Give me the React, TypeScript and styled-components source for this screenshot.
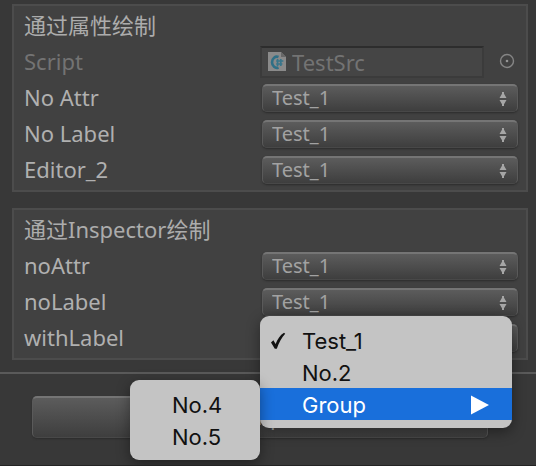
import React from "react";
import styled, { createGlobalStyle, css } from "styled-components";

const GlobalStyle = createGlobalStyle`
  * { box-sizing: border-box; }
  html, body { margin: 0; background: #383838; }
  body, button, input, select {
    font-family: "Noto Sans", "Noto Sans CJK SC", sans-serif;
  }
`;

const Page = styled.main`
  display: flex;
  flex-direction: column;
  min-height: 100vh;
  padding-top: 4px;
  overflow: hidden;
  background: #383838;
  border-bottom: 1px solid #242424;
`;

const Panel = styled.section`
  margin: 0 8px 16px 12px;
  padding: 2px;
  border: 2px solid #4c4c4c;
  background: #414141;

  &:last-of-type { margin-bottom: 12px; }
`;

const Title = styled.h2`
  margin: 0;
  padding: 0 8px 2px;
  font-size: 22px;
  line-height: 34px;
  font-weight: 400;
  color: #acacac;
`;

const Row = styled.div`
  display: grid;
  grid-template-columns: 238px minmax(0, 1fr);
  align-items: center;
  height: 36px;
  padding: 0 6px 0 8px;
`;

const Label = styled.label<{ $muted?: boolean }>`
  padding-bottom: 2px;
  font-size: 22px;
  line-height: 34px;
  color: ${(p) => (p.$muted ? "#737373" : "#b0b0b0")};
`;

const Control = styled.div`
  position: relative;
  height: 28px;
`;

const raised = css`
  border: 1px solid #5a5a5a;
  border-top: 2px solid #757575;
  border-bottom-color: #484848;
  border-radius: 5px;
  background: linear-gradient(#5c5c5c, #3e3e3e);
  box-shadow: 0 1px 2px #2c2c2c;
`;

const Select = styled.select`
  ${raised}
  display: block;
  width: 100%;
  height: 28px;
  padding: 0 9px 2px;
  appearance: none;
  font-size: 20px;
  line-height: 22px;
  color: #a2a2a2;
`;

const Arrows = styled.svg`
  position: absolute;
  top: 7px;
  right: 11px;
  pointer-events: none;
`;

const ObjectControl = styled.div`
  display: flex;
  align-items: center;
  margin-left: -2px;
`;

const ObjectField = styled.div`
  display: flex;
  flex: 1;
  align-items: center;
  gap: 6px;
  min-width: 0;
  height: 32px;
  padding: 0 6px;
  border: 2px solid #3b3b3b;
  border-top-color: #2d2d2d;
  background: #454545;
`;

const ObjectInput = styled.input`
  flex: 1;
  min-width: 0;
  padding: 0;
  border: 0;
  background: none;
  font-size: 22px;
  line-height: 28px;
  color: #737373;
`;

const Picker = styled.button`
  display: flex;
  width: 34px;
  height: 32px;
  padding: 7px 0 0 15px;
  border: 0;
  background: none;
`;

const Menu = styled.ul`
  position: absolute;
  z-index: 1;
  top: -8px;
  left: -2px;
  width: 252px;
  margin: 0;
  padding: 8px 0;
  list-style: none;
  border-radius: 9px;
  background: #c4c4c4;
  box-shadow: 0 4px 14px rgba(0, 0, 0, 0.4);
`;

const SubMenu = styled(Menu)`
  top: -8px;
  right: 100%;
  left: auto;
  width: 130px;
`;

const MenuEntry = styled.li`
  position: relative;
`;

const MenuItem = styled.button<{ $active?: boolean }>`
  display: grid;
  grid-template-columns: 32px 1fr auto;
  align-items: center;
  width: 100%;
  height: 32px;
  padding: 1px 22px 0 10px;
  border: 0;
  background: ${(p) => (p.$active ? "#196fdb" : "none")};
  font-family: Inter, sans-serif;
  font-size: 22px;
  line-height: 30px;
  text-align: left;
  color: ${(p) => (p.$active ? "#fff" : "#111")};
`;

const Footer = styled.footer`
  padding: 22px 48px 27px 32px;
  border-top: 2px solid #5a5a5a;
`;

const AddButton = styled.button`
  ${raised}
  display: block;
  width: 100%;
  height: 42px;
  padding: 0 0 4px;
  font-size: 22px;
  line-height: 34px;
  color: #a2a2a2;
`;

const ScriptIcon = () => (
  <svg width="18" height="20" viewBox="0 0 18 20" aria-hidden="true">
    <path d="M0 0h13l5 5v14H0z" fill="#8a8a8a" />
    <path d="M13 0v5h5z" fill="#686868" />
    <path d="M10.500 5A4.800 5.600 0 1 0 10.500 15.500" fill="none" stroke="#2f6f86" strokeWidth="2.600" />
    <path d="M9.600 7v7M12.800 7v7M8.200 9h7.200M8.200 12h6.200" stroke="#39758a" strokeWidth="1.700" />
  </svg>
);

const PopupArrows = () => (
  <Arrows width="8" height="16" viewBox="0 0 8 16" aria-hidden="true">
    <path d="M4 1 7.500 7h-7zM4 15 7.500 9h-7z" fill="#a6a6a6" />
    <path d="M4 1v5M4 10v5" stroke="#a6a6a6" strokeWidth="2" />
  </Arrows>
);

const CheckMark = () => (
  <svg width="16" height="18" viewBox="0 0 16 18" aria-hidden="true">
    <path d="M1 10.6 3.400 8.200 5.6 12C7.6 7 10 3.200 14 .8L15.200 1.800C11.800 5.400 9 10.400 6.800 16.800H4.800z" fill="#111" />
  </svg>
);

const SubMenuArrow = () => (
  <svg width="20" height="20" viewBox="0 0 20 20" aria-hidden="true">
    <path d="M1 .5 19 10 1 19.500z" fill="#fff" />
  </svg>
);

type PopupProps = { id: string; label: string; children?: React.ReactNode };

const PopupRow = ({ id, label, children }: PopupProps) => (
  <Row>
    <Label htmlFor={id}>{label}</Label>
    <Control>
      <Select id={id} defaultValue="Test_1">
        <option>Test_1</option>
        <option>No.2</option>
        <optgroup label="Group">
          <option>No.4</option>
          <option>No.5</option>
        </optgroup>
      </Select>
      <PopupArrows />
      {children}
    </Control>
  </Row>
);

const OpenMenu = () => (
  <Menu role="menu">
    <MenuEntry role="none">
      <MenuItem role="menuitemradio" aria-checked="true">
        <CheckMark />
        <span>Test_1</span>
      </MenuItem>
    </MenuEntry>
    <MenuEntry role="none">
      <MenuItem role="menuitemradio" aria-checked="false">
        <i />
        <span>No.2</span>
      </MenuItem>
    </MenuEntry>
    <MenuEntry role="none">
      <MenuItem role="menuitem" aria-haspopup="menu" aria-expanded="true" $active>
        <i />
        <span>Group</span>
        <SubMenuArrow />
      </MenuItem>
      <SubMenu role="menu">
        {["No.4", "No.5"].map((name) => (
          <MenuEntry role="none" key={name}>
            <MenuItem role="menuitem">
              <i />
              <span>{name}</span>
            </MenuItem>
          </MenuEntry>
        ))}
      </SubMenu>
    </MenuEntry>
  </Menu>
);

export default function App() {
  return (
    <>
      <GlobalStyle />
      <Page>
        <Panel>
          <Title>通过属性绘制</Title>
          <Row>
            <Label htmlFor="script" $muted>Script</Label>
            <ObjectControl>
              <ObjectField>
                <ScriptIcon />
                <ObjectInput id="script" defaultValue="TestSrc" disabled />
              </ObjectField>
              <Picker aria-label="Select script" disabled>
                <svg width="16" height="16" viewBox="0 0 16 16" aria-hidden="true">
                  <circle cx="8" cy="8" r="6.500" fill="none" stroke="#858585" strokeWidth="1.400" />
                  <circle cx="8" cy="8" r="1.300" fill="#959595" />
                </svg>
              </Picker>
            </ObjectControl>
          </Row>
          <PopupRow id="no-attr" label="No Attr" />
          <PopupRow id="no-label" label="No Label" />
          <PopupRow id="editor-2" label="Editor_2" />
        </Panel>
        <Panel>
          <Title>通过Inspector绘制</Title>
          <PopupRow id="noAttr" label="noAttr" />
          <PopupRow id="noLabel" label="noLabel" />
          <PopupRow id="withLabel" label="withLabel">
            <OpenMenu />
          </PopupRow>
        </Panel>
        <Footer>
          <AddButton>Add Component</AddButton>
        </Footer>
      </Page>
    </>
  );
}
